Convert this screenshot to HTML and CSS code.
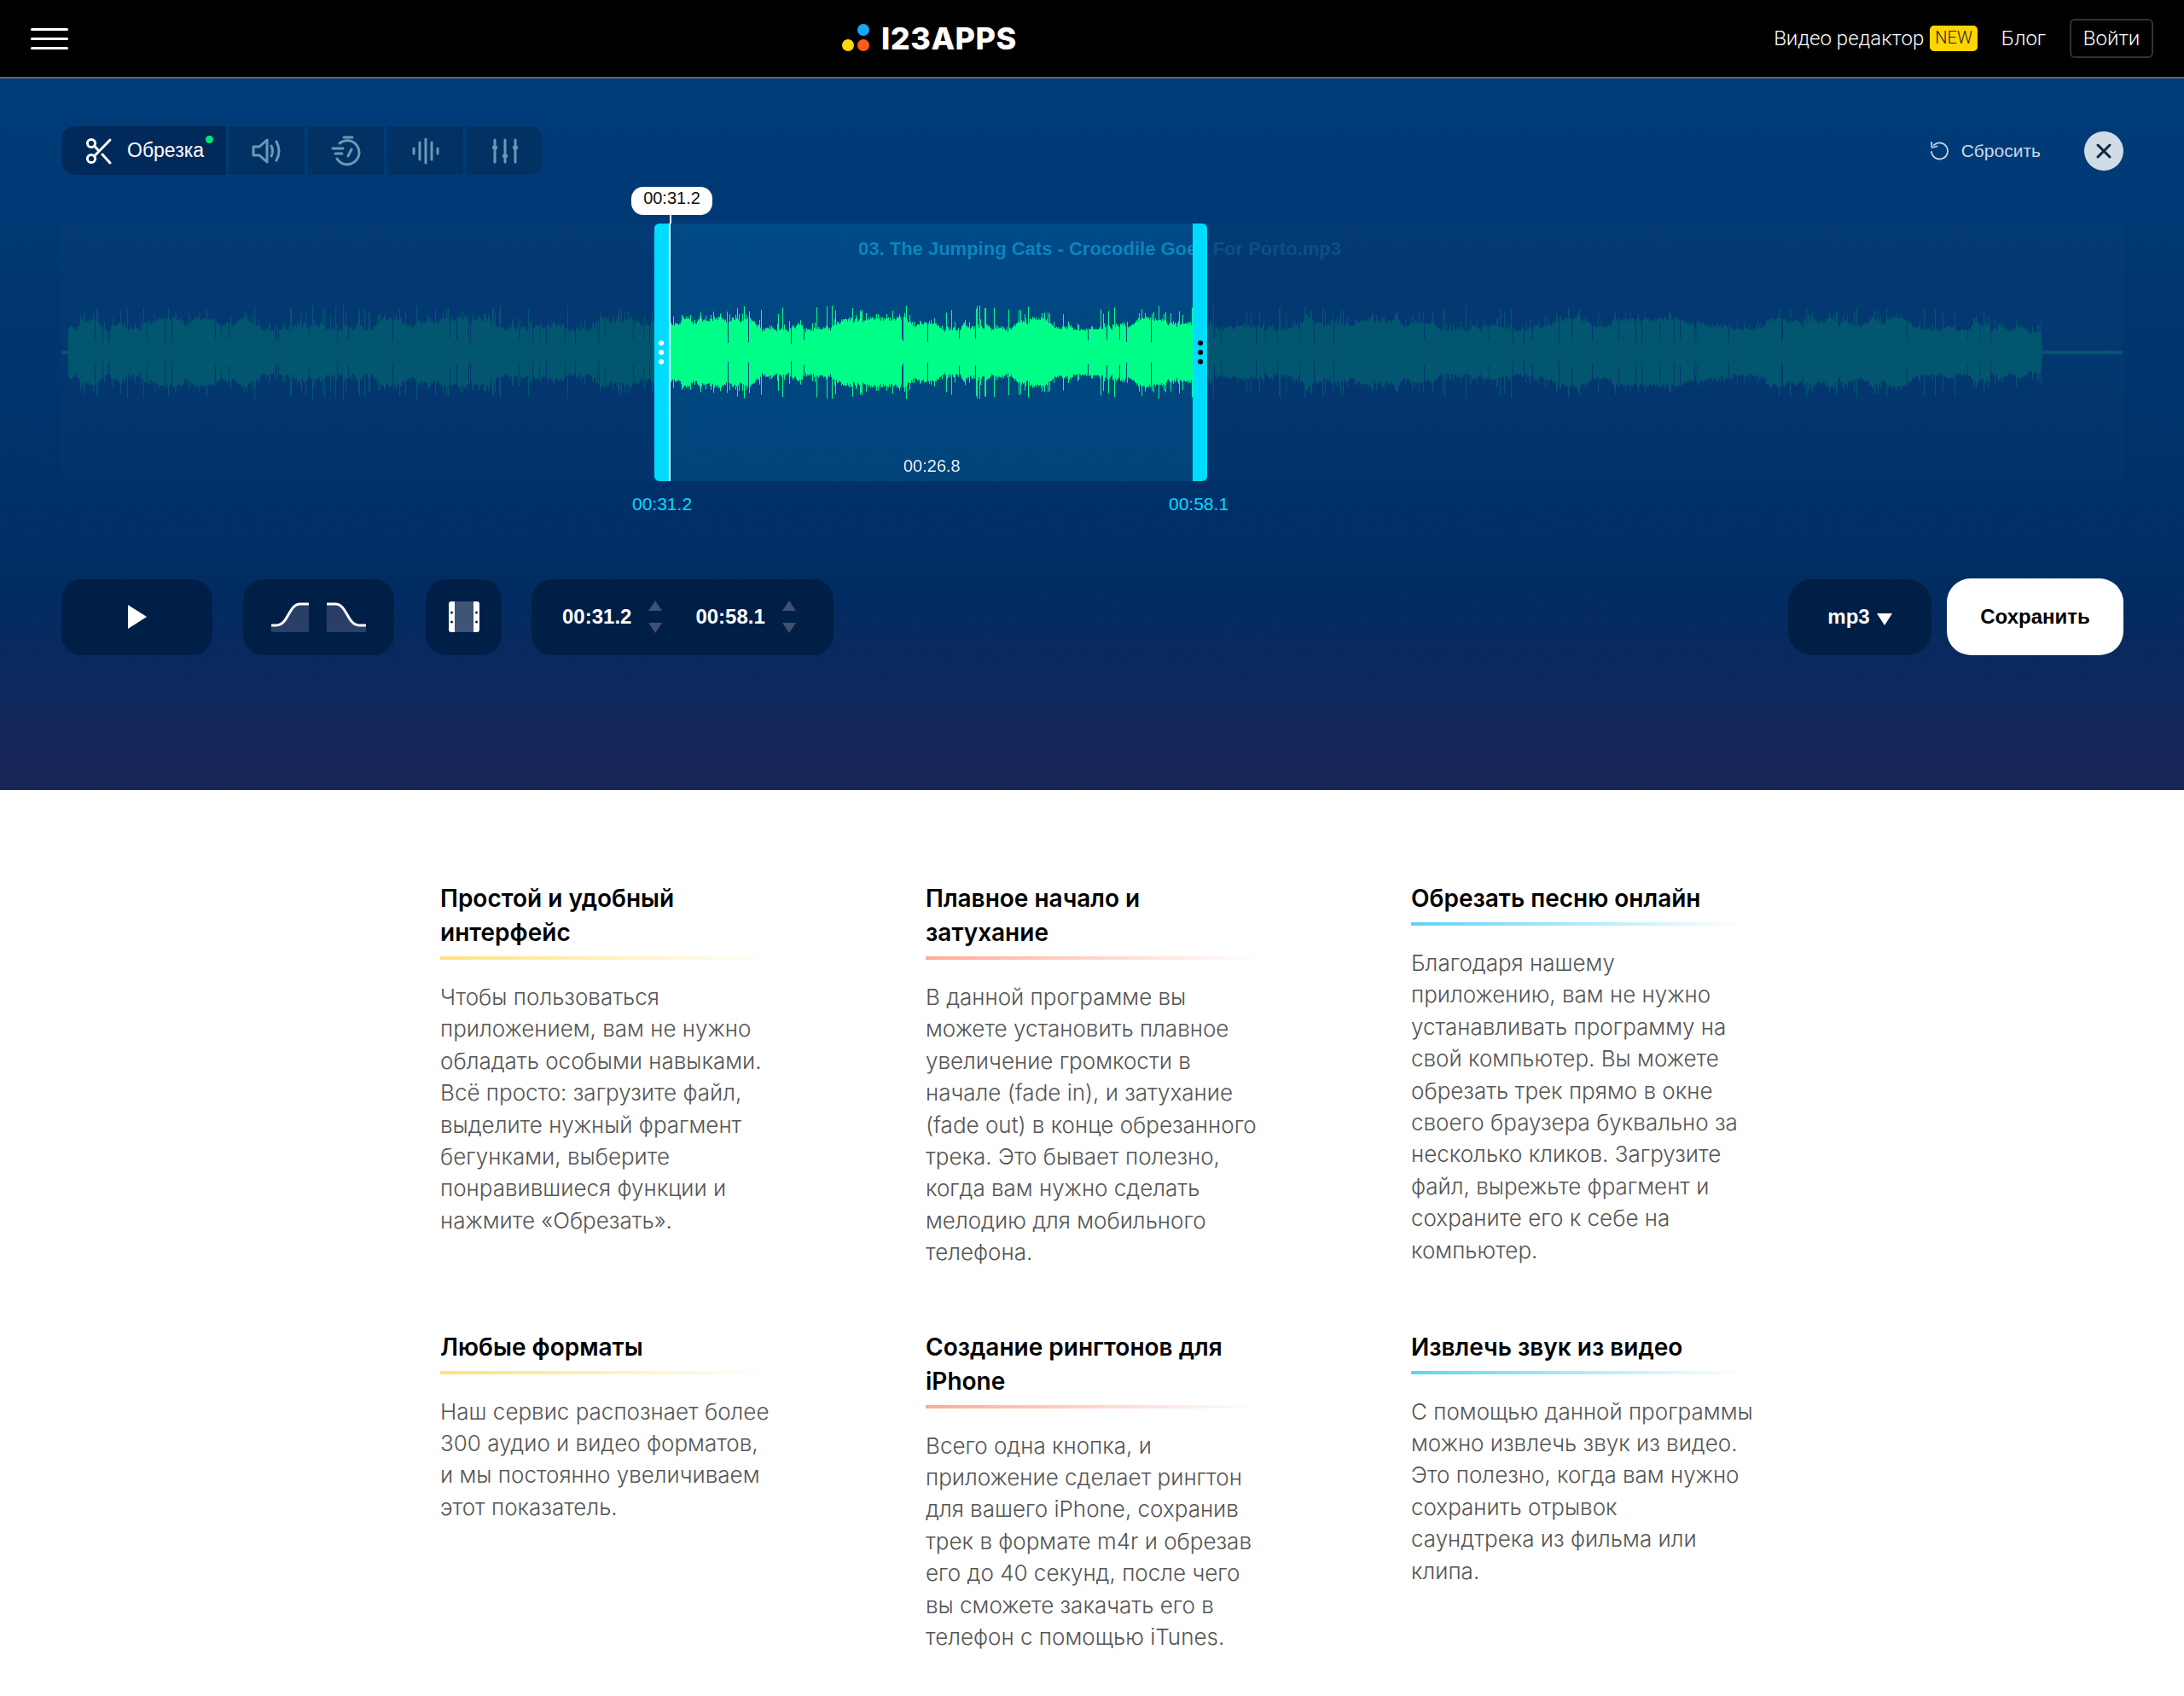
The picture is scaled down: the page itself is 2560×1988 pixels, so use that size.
FILE: index.html

```html
<!DOCTYPE html>
<html lang="ru">
<head>
    <meta charset="UTF-8" />
    <meta name="viewport" content="width=device-width, initial-scale=1.0"/>
    <title>Обрезать песню онлайн</title>
    <link rel="stylesheet" href="styles.css">
</head>
<body>
    <header class="topbar">
        <button class="burger"><span></span><span></span><span></span></button>
        <a class="logo">
            <svg class="logo-dots" width="36" height="36" viewBox="0 0 36 36">
                <circle cx="25" cy="8" r="7" fill="#1aa5f5"/>
                <circle cx="7" cy="26" r="7" fill="#ffd60a"/>
                <circle cx="25" cy="26" r="7" fill="#ff5a1a"/>
            </svg>
            <span class="logo-text">I23APPS</span>
        </a>
        <nav class="topnav">
            <a>Видео редактор</a>
            <span class="badge">NEW</span>
            <a class="blog-link">Блог</a>
            <a class="login">Войти</a>
        </nav>
    </header>

    <section class="editor">
        <div class="tool-row">
            <div class="tabs">
                <div class="tab tab-active">
                    <svg width="32" height="32" viewBox="0 0 32 32" fill="none" stroke="#fff" stroke-width="3" stroke-linecap="round">
                        <circle cx="7" cy="7" r="4.6"/>
                        <circle cx="7" cy="25" r="4.6"/>
                        <path d="M10.5 22 L29 3"/>
                        <path d="M10.5 10 L16 16"/>
                        <path d="M20 20 L29 30"/>
                    </svg>
                    <span>Обрезка</span>
                    <i class="tab-dot"></i>
                </div>
                <div class="tab">
                    <svg width="36" height="32" viewBox="0 0 36 32" fill="none" stroke="#6f97b6" stroke-width="3" stroke-linejoin="round" stroke-linecap="round">
                        <path d="M2 11 H9 L18 3 V29 L9 21 H2 Z"/>
                        <path d="M23 10 Q26 16 23 22"/>
                        <path d="M29 5 Q35 16 29 27"/>
                    </svg>
                </div>
                <div class="tab">
                    <svg width="36" height="36" viewBox="0 0 36 36" fill="none" stroke="#6f97b6" stroke-width="3" stroke-linecap="round">
                        <path d="M15 2 H25"/>
                        <path d="M10 9 A14 14 0 1 1 7 27"/>
                        <path d="M2 15 H14"/>
                        <path d="M5 21 H13"/>
                        <path d="M24 16 L20 24"/>
                    </svg>
                </div>
                <div class="tab">
                    <svg width="32" height="32" viewBox="0 0 32 32" fill="none" stroke="#6f97b6" stroke-width="3" stroke-linecap="round">
                        <path d="M2 13 V19"/>
                        <path d="M9 6 V26"/>
                        <path d="M16 2 V30"/>
                        <path d="M23 6 V26"/>
                        <path d="M30 13 V19"/>
                    </svg>
                </div>
                <div class="tab">
                    <svg width="32" height="30" viewBox="0 0 32 30" fill="none" stroke="#6f97b6" stroke-width="3" stroke-linecap="round">
                        <path d="M4 2 V7 M4 15 V28"/>
                        <circle cx="4" cy="11" r="2" fill="#6f97b6" stroke-width="2"/>
                        <path d="M16 2 V17 M16 25 V28"/>
                        <circle cx="16" cy="21" r="2" fill="#6f97b6" stroke-width="2"/>
                        <path d="M28 2 V7 M28 15 V28"/>
                        <circle cx="28" cy="11" r="2" fill="#6f97b6" stroke-width="2"/>
                    </svg>
                </div>
            </div>
            <div class="tool-actions">
                <a class="reset">
                    <svg width="22" height="24" viewBox="0 0 22 24" fill="none" stroke="#c9d8e6" stroke-width="1.8" stroke-linecap="round" stroke-linejoin="round">
                        <path d="M5 5 A9.5 9.5 0 1 1 2 13"/>
                        <path d="M2 2 L2.5 8 L8.5 6.5"/>
                    </svg>
                    <span>Сбросить</span>
                </a>
                <button class="close-btn">
                    <svg width="20" height="20" viewBox="0 0 20 20" stroke="#10263f" stroke-width="3" stroke-linecap="round">
                        <path d="M3 3 L17 17 M17 3 L3 17"/>
                    </svg>
                </button>
            </div>
        </div>

        <div class="track">
            <div class="selection"></div>
            <canvas id="wave" class="wave" width="2416" height="302"></canvas>
            <div class="track-title">03. The Jumping Cats - Crocodile Goes For Porto.mp3</div>
            <div class="handle handle-left"><i></i><i></i><i></i></div>
            <div class="handle handle-right"><i></i><i></i><i></i></div>
            <div class="cursor-tip">00:31.2</div>
            <div class="sel-length">00:26.8</div>
            <div class="mark mark-start">00:31.2</div>
            <div class="mark mark-end">00:58.1</div>
        </div>

        <div class="controls">
            <button class="ctl ctl-play">
                <svg width="22" height="28" viewBox="0 0 22 28"><path d="M0 0 L22 14 L0 28 Z" fill="#fff"/></svg>
            </button>
            <div class="ctl ctl-fade">
                <svg width="44" height="36" viewBox="0 0 44 36">
                    <path d="M0 28 H10 C20 28 20 4 34 4 H44 V36 H0 Z" fill="#2a3f66"/>
                    <path d="M0 28 H6 C20 28 20 3 34 3 H43" fill="none" stroke="#fff" stroke-width="3" stroke-linecap="round"/>
                </svg>
                <svg width="46" height="36" viewBox="0 0 46 36">
                    <path d="M0 4 H10 C24 4 24 28 36 28 H46 V36 H0 Z" fill="#2a3f66"/>
                    <path d="M1 3 H10 C24 3 24 28 38 28 H45" fill="none" stroke="#fff" stroke-width="3" stroke-linecap="round"/>
                </svg>
            </div>
            <button class="ctl ctl-loop">
                <svg width="36" height="36" viewBox="0 0 36 36">
                    <rect x="6" y="0" width="24" height="36" fill="#3e5578"/>
                    <path d="M3 0 H7 V36 H3 Q0 36 0 33 V3 Q0 0 3 0 Z" fill="#fff"/>
                    <path d="M29 0 H33 Q36 0 36 3 V33 Q36 36 33 36 H29 Z" fill="#fff"/>
                    <circle cx="3.5" cy="13" r="1.5" fill="#001f47"/>
                    <circle cx="3.5" cy="24" r="1.5" fill="#001f47"/>
                    <circle cx="32.5" cy="13" r="1.5" fill="#001f47"/>
                    <circle cx="32.5" cy="24" r="1.5" fill="#001f47"/>
                </svg>
            </button>
            <div class="ctl ctl-time">
                <span class="time-value">00:31.2</span>
                <span class="spinner"><i class="up"></i><i class="down"></i></span>
                <span class="time-value time-end">00:58.1</span>
                <span class="spinner"><i class="up"></i><i class="down"></i></span>
            </div>
            <button class="ctl ctl-format">mp3 <i class="caret"></i></button>
            <button class="save">Сохранить</button>
        </div>
    </section>

    <section class="features">
        <article class="feature yellow">
            <h3>Простой и удобный<br>интерфейс</h3>
            <p>Чтобы пользоваться<br>приложением, вам не нужно<br>обладать особыми навыками.<br>Всё просто: загрузите файл,<br>выделите нужный фрагмент<br>бегунками, выберите<br>понравившиеся функции и<br>нажмите «Обрезать».</p>
        </article>
        <article class="feature salmon">
            <h3>Плавное начало и<br>затухание</h3>
            <p>В данной программе вы<br>можете установить плавное<br>увеличение громкости в<br>начале (fade in), и затухание<br>(fade out) в конце обрезанного<br>трека. Это бывает полезно,<br>когда вам нужно сделать<br>мелодию для мобильного<br>телефона.</p>
        </article>
        <article class="feature cyan">
            <h3>Обрезать песню онлайн</h3>
            <p>Благодаря нашему<br>приложению, вам не нужно<br>устанавливать программу на<br>свой компьютер. Вы можете<br>обрезать трек прямо в окне<br>своего браузера буквально за<br>несколько кликов. Загрузите<br>файл, вырежьте фрагмент и<br>сохраните его к себе на<br>компьютер.</p>
        </article>
        <article class="feature yellow">
            <h3>Любые форматы</h3>
            <p>Наш сервис распознает более<br>300 аудио и видео форматов,<br>и мы постоянно увеличиваем<br>этот показатель.</p>
        </article>
        <article class="feature salmon">
            <h3>Создание рингтонов для<br>iPhone</h3>
            <p>Всего одна кнопка, и<br>приложение сделает рингтон<br>для вашего iPhone, сохранив<br>трек в формате m4r и обрезав<br>его до 40 секунд, после чего<br>вы сможете закачать его в<br>телефон с помощью iTunes.</p>
        </article>
        <article class="feature cyan">
            <h3>Извлечь звук из видео</h3>
            <p>С помощью данной программы<br>можно извлечь звук из видео.<br>Это полезно, когда вам нужно<br>сохранить отрывок<br>саундтрека из фильма или<br>клипа.</p>
        </article>
    </section>

    <script src="wave.js"></script>
</body>
</html>
```

FILE: styles.css

```css
* {
    box-sizing: border-box;
}
body {
    margin: 0;
    background-color: white;
    color: black;
    font-family: "Liberation Sans", Arial, sans-serif;
}
button {
    border: 0;
    padding: 0;
    font: inherit;
    color: inherit;
    background: none;
}

/* top bar */
.topbar {
    display: flex;
    align-items: center;
    height: 92px;
    padding: 0 36px;
    background-color: black;
    border-bottom: 2px solid #666;
}
.burger {
    display: flex;
    flex-direction: column;
    gap: 8px;
    width: 44px;
}
.burger span {
    display: block;
    height: 3px;
    border-radius: 2px;
    background-color: white;
}
.logo {
    display: flex;
    align-items: center;
    gap: 10px;
    margin-left: 907px;
}
.logo-text {
    font-family: Inter, sans-serif;
    font-size: 36px;
    font-weight: 800;
    letter-spacing: 0.5px;
    color: white;
}
.topnav {
    display: flex;
    align-items: center;
    margin-left: auto;
    font-family: Roboto, sans-serif;
    font-size: 24px;
    font-weight: 300;
    color: white;
}
.badge {
    margin-left: 7px;
    padding: 0 6px;
    height: 30px;
    line-height: 28px;
    border-radius: 5px;
    background-color: #ffd500;
    color: #222;
    font-size: 20px;
}
.blog-link {
    margin-left: 28px;
}
.login {
    margin-left: 28px;
    width: 98px;
    height: 46px;
    line-height: 42px;
    text-align: center;
    border: 2px solid #333;
    border-radius: 6px;
}

/* editor */
.editor {
    height: 834px;
    padding: 56px 71px 0 72px;
    background: linear-gradient(#003d7a 0%, #00336c 50%, #012c62 72%, #1a2457 100%);
}
.tool-row {
    display: flex;
    align-items: center;
    justify-content: space-between;
    height: 57px;
}
.tabs {
    display: flex;
    gap: 4px;
    height: 57px;
}
.tab {
    display: flex;
    align-items: center;
    justify-content: center;
    width: 89px;
    background-color: #013263;
}
.tab:last-child {
    border-radius: 0 16px 16px 0;
}
.tab-active {
    position: relative;
    justify-content: flex-start;
    gap: 17px;
    width: 193px;
    padding-left: 28px;
    margin-right: -1px;
    border-radius: 16px 0 0 16px;
    background-color: #01295a;
    color: white;
    font-size: 23px;
}
.tab-dot {
    position: absolute;
    right: 15px;
    top: 11px;
    width: 9px;
    height: 9px;
    border-radius: 50%;
    background-color: #00e67a;
}
.tool-actions {
    display: flex;
    align-items: center;
}
.reset {
    display: flex;
    align-items: center;
    gap: 15px;
    color: #c9d8e6;
    font-size: 21px;
}
.close-btn {
    display: flex;
    align-items: center;
    justify-content: center;
    width: 46px;
    height: 46px;
    margin-left: 51px;
    border-radius: 50%;
    background-color: #d0dce6;
}

.track {
    position: relative;
    height: 302px;
    margin-top: 57px;
    background-color: rgba(255, 255, 255, 0.012);
}
.selection {
    position: absolute;
    left: 695px;
    width: 648px;
    top: 0;
    bottom: 0;
    background: linear-gradient(#004a86, #00447b);
}
.wave {
    position: absolute;
    left: 0;
    top: 0;
}
.track-title {
    position: absolute;
    left: 934px;
    top: 17px;
    font-size: 22px;
    font-weight: bold;
    white-space: nowrap;
    color: transparent;
    background: linear-gradient(90deg, #0a86c0 392px, #0c4f8a 392px);
    -webkit-background-clip: text;
    background-clip: text;
}
.handle {
    position: absolute;
    top: 0;
    bottom: 0;
    display: flex;
    flex-direction: column;
    align-items: center;
    justify-content: center;
    gap: 5px;
    background-color: #00dcff;
}
.handle i {
    width: 6px;
    height: 6px;
    border-radius: 50%;
}
.handle-left {
    left: 695px;
    width: 19px;
    padding-right: 2px;
    border-right: 2px solid white;
    border-radius: 6px 0 0 6px;
}
.handle-left i {
    background-color: white;
}
.handle-right {
    left: 1326px;
    width: 17px;
    border-radius: 0 6px 6px 0;
}
.handle-right i {
    background-color: black;
}
.cursor-tip {
    position: absolute;
    left: 668px;
    top: -43px;
    width: 95px;
    height: 33px;
    line-height: 27px;
    text-align: center;
    border-radius: 14px;
    background-color: white;
    font-size: 20px;
    color: #111;
}
.cursor-tip::after {
    content: "";
    position: absolute;
    left: 45px;
    top: 32px;
    width: 2px;
    height: 11px;
    background-color: white;
}
.sel-length {
    position: absolute;
    left: 987px;
    bottom: 6px;
    font-size: 20px;
    color: #e6eef5;
}
.mark {
    position: absolute;
    top: 317px;
    font-size: 21px;
    color: #00dcff;
}
.mark-start {
    left: 669px;
}
.mark-end {
    left: 1298px;
}

/* bottom controls */
.controls {
    display: flex;
    align-items: center;
    height: 90px;
    margin-top: 114px;
}
.ctl {
    display: flex;
    align-items: center;
    justify-content: center;
    height: 89px;
    border-radius: 24px;
    background-color: #001f47;
    color: white;
    font-size: 24px;
    font-weight: bold;
}
.ctl-play {
    width: 177px;
}
.ctl-fade {
    width: 177px;
    margin-left: 36px;
    gap: 21px;
}
.ctl-loop {
    width: 89px;
    margin-left: 37px;
}
.ctl-time {
    justify-content: flex-start;
    width: 354px;
    margin-left: 35px;
    padding-left: 36px;
}
.time-end {
    margin-left: 39px;
}
.spinner {
    display: flex;
    flex-direction: column;
    gap: 14px;
    margin-left: 20px;
}
.spinner i {
    display: block;
    width: 0;
    height: 0;
    border-left: 8px solid transparent;
    border-right: 8px solid transparent;
}
.spinner .up {
    border-bottom: 12px solid #40506f;
}
.spinner .down {
    border-top: 12px solid #40506f;
}
.ctl-format {
    width: 168px;
    margin-left: auto;
    gap: 8px;
    border-radius: 28px;
}
.caret {
    width: 0;
    height: 0;
    margin-top: 6px;
    border-left: 9px solid transparent;
    border-right: 9px solid transparent;
    border-top: 14px solid white;
}
.save {
    width: 207px;
    height: 90px;
    margin-left: 18px;
    border-radius: 28px;
    background-color: white;
    color: black;
    font-size: 24px;
    font-weight: bold;
}

/* feature text */
.features {
    display: grid;
    grid-template-columns: repeat(3, 390px);
    column-gap: 179px;
    row-gap: 72px;
    width: 1528px;
    margin: 0 auto;
    padding: 107px 0 50px;
    font-family: Inter, sans-serif;
}
.feature h3 {
    margin: 0;
    padding-bottom: 8px;
    font-size: 28px;
    line-height: 40px;
    font-weight: 600;
    color: black;
    border-bottom: 4px solid;
}
.feature p {
    margin: 25px 0 0;
    font-size: 26px;
    line-height: 37.4px;
    font-weight: 300;
    color: #555;
    white-space: nowrap;
}
.yellow h3 {
    border-image: linear-gradient(90deg, #ffe27a, rgba(255, 226, 122, 0)) 1;
}
.salmon h3 {
    border-image: linear-gradient(90deg, #ffa995, rgba(255, 169, 149, 0)) 1;
}
.cyan h3 {
    border-image: linear-gradient(90deg, #5fd3f5, rgba(95, 211, 245, 0)) 1;
}
```

FILE: wave.js

```js
// draws the audio waveform, dim outside the selection and bright inside
var canvas = document.getElementById("wave");
var ctx = canvas.getContext("2d");

var seed = 123;
function rnd() {
    seed = (seed * 16807) % 2147483647;
    return seed / 2147483647;
}

var mid = 151;
var waveStart = 8;
var waveEnd = 2322;
var selStart = 714;
var selEnd = 1326;

var level = 30;
for (var x = 0; x < canvas.width; x++) {
    var amp = 2;
    if (x >= waveStart && x < waveEnd) {
        level += (rnd() - 0.5) * 5;
        if (level < 24) level = 24;
        if (level > 38) level = 38;
        amp = level + rnd() * 4;
        var r = rnd();
        if (r < 0.07) amp = 44 + rnd() * 11;
        else if (r < 0.11) amp = 10 + rnd() * 6;
        else if (r < 0.2) amp = level + 6 + rnd() * 6;
        // tail of the track fades down
        if (x > 2260) amp *= 0.75;
    }
    if (x < 8 && x >= 0) amp = 2;
    ctx.fillStyle = (x >= selStart && x < selEnd) ? "#00ff88" : "#02566f";
    ctx.fillRect(x, mid - amp, 1, amp * 2);
}
```
